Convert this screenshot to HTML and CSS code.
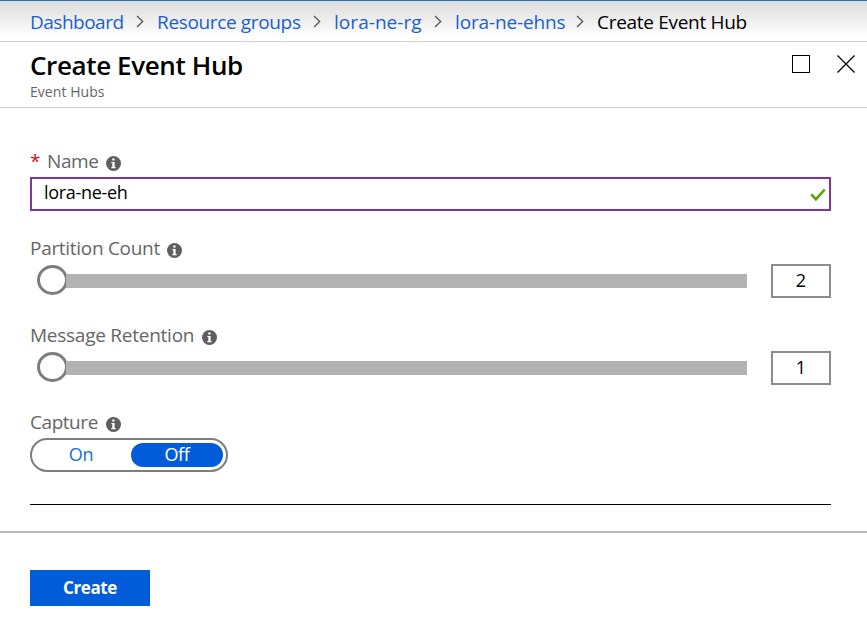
FILE: index.html
```html
<!DOCTYPE html>
<html lang="en">
<head>
<meta charset="utf-8">
<title>Create Event Hub</title>
<link rel="stylesheet" href="styles.css">
</head>
<body>
<svg class="defs" width="0" height="0" aria-hidden="true">
  <symbol id="chevron" viewBox="0 0 8 13"><path d="M1 1l5.7 5.5L1 12" fill="none" stroke="#555" stroke-width="1.3"/></symbol>
  <symbol id="info" viewBox="0 0 15 15"><circle cx="7.5" cy="7.5" r="7.5" fill="#5f5f5f"/><path d="M6.2 2.6h2.4v2H6.2zM5.3 5.9h3.3v5.1h1v1.2H5.3V11h1V7.1h-1z" fill="#fff"/></symbol>
</svg>
<nav class="breadcrumb">
  <a class="crumb crumb-dashboard">Dashboard</a>
  <svg class="chevron"><use href="#chevron"/></svg>
  <a class="crumb crumb-groups">Resource groups</a>
  <svg class="chevron"><use href="#chevron"/></svg>
  <a class="crumb crumb-rg">lora-ne-rg</a>
  <svg class="chevron"><use href="#chevron"/></svg>
  <a class="crumb crumb-ns">lora-ne-ehns</a>
  <svg class="chevron"><use href="#chevron"/></svg>
  <span class="crumb current">Create Event Hub</span>
</nav>
<header class="header">
  <div class="titles">
    <h1 class="title">Create Event Hub</h1>
    <div class="subtitle">Event Hubs</div>
  </div>
  <div class="window-actions">
    <svg width="18" height="18" viewBox="0 0 18 18"><rect x=".5" y=".5" width="17" height="17" fill="none" stroke="#000"/></svg>
    <svg width="18" height="18" viewBox="0 0 18 18"><path d="M.5.5l17 17M17.5.5l-17 17" stroke="#000" stroke-width="1.2"/></svg>
  </div>
</header>
<main class="form">
  <div class="field">
    <div class="label"><span class="required">*</span><span class="label-name">Name</span><svg class="info"><use href="#info"/></svg></div>
    <div class="input"><span>lora-ne-eh</span>
      <svg width="16" height="14" viewBox="0 0 16 14"><path d="M1.3 6.3l4.6 5L14.7 1.5" fill="none" stroke="#57a300" stroke-width="2.6"/></svg>
    </div>
  </div>
  <div class="field">
    <div class="label"><span class="label-partition">Partition Count</span><svg class="info"><use href="#info"/></svg></div>
    <div class="slider-row"><div class="slider"><div class="thumb"></div><div class="track"></div></div><div class="value">2</div></div>
  </div>
  <div class="field">
    <div class="label"><span class="label-retention">Message Retention</span><svg class="info"><use href="#info"/></svg></div>
    <div class="slider-row"><div class="slider"><div class="thumb"></div><div class="track"></div></div><div class="value">1</div></div>
  </div>
  <div class="field">
    <div class="label"><span class="label-capture">Capture</span><svg class="info"><use href="#info"/></svg></div>
    <div class="toggle"><div class="option">On</div><div class="option selected">Off</div></div>
  </div>
  <hr class="rule">
</main>
<footer class="footer"><button class="create">Create</button></footer>
</body>
</html>
```

FILE: styles.css
```css
* { box-sizing: border-box; }
body {
  margin: 0;
  height: 628px;
  overflow: hidden;
  background: #fff;
  color: #000;
  font-family: "Open Sans", "Noto Sans", sans-serif;
}
.defs { display: block; }
.breadcrumb {
  display: flex;
  align-items: center;
  height: 42px;
  padding: 2px 0 0 30px;
  border-top: 1px solid #2a6cad;
  border-bottom: 1px solid #d2d2d2;
  background: linear-gradient(#dcdcdc, #fff 90%);
  font-size: 19px;
  white-space: nowrap;
}
.crumb { color: #1a5ed6; flex: none; }
.crumb-dashboard { width: 94px; letter-spacing: -0.5px; }
.crumb-groups { width: 144px; letter-spacing: -0.35px; }
.crumb-rg { width: 88px; letter-spacing: 0.05px; }
.crumb-ns { width: 109px; letter-spacing: -0.15px; }
.current { color: #000; letter-spacing: -0.3px; }
.chevron { width: 8px; height: 13px; margin: 0 13px 2px 12px; flex: none; }
.header {
  display: flex;
  justify-content: space-between;
  height: 66px;
  padding: 5px 12px 0 30px;
  border-bottom: 1px solid #d2d2d2;
}
.title { margin: 0; font-size: 26px; line-height: 36px; font-weight: 600; letter-spacing: -0.38px; }
.subtitle { margin-top: 1px; font-size: 14px; line-height: 16px; color: #666; letter-spacing: 0.05px; }
.window-actions { display: flex; gap: 27px; padding-top: 8px; }
.form { padding: 35px 36px 0 30px; }
.field { height: 68px; margin-bottom: 19px; }
.label {
  display: flex;
  align-items: center;
  height: 34px;
  padding-top: 2px;
  color: #666;
  font-size: 19px;
  white-space: nowrap;
}
.label-name { width: 51px; letter-spacing: -0.4px; }
.label-partition { width: 129px; letter-spacing: -0.3px; }
.label-retention { width: 164px; letter-spacing: -0.25px; }
.label-capture { width: 68px; letter-spacing: -0.45px; }
.required { width: 17px; color: #e00b1c; }
.info { width: 15px; height: 15px; margin: 4px 0 0 8px; }
.input {
  display: flex;
  align-items: center;
  justify-content: space-between;
  height: 34px;
  padding: 0 3px 2px 12px;
  border: 2px solid #823594;
  font-size: 18px;
  letter-spacing: -0.3px;
}
.input span { margin-top: -2px; }
.input svg { margin-top: 4px; }
.slider-row { display: flex; justify-content: space-between; height: 34px; }
.slider { display: flex; align-items: center; width: 717px; padding-left: 7px; height: 32px; }
.thumb { width: 31px; height: 30px; border: 3px solid #7d7d7d; border-radius: 50%; background: #fff; }
.track { flex: 1; height: 14px; margin: 2px 0 0 -2px; background: #b2b2b2; }
.value {
  width: 60px;
  height: 34px;
  border: 2px solid #8d8d8d;
  font-size: 18px;
  line-height: 28px;
  text-align: center;
}
.toggle {
  display: flex;
  width: 198px;
  height: 34px;
  padding: 3px;
  border: 2px solid #7d7d7d;
  border-radius: 17px;
  font-size: 18px;
  line-height: 23px;
  text-align: center;
}
.option { width: 96px; height: 24px; padding-right: 4px; color: #1a6be0; letter-spacing: -0.3px; }
.option.selected { width: 92px; padding: 0; border-radius: 12px; background: #015cda; color: #fff; }
.rule { margin: 32px 0 0; border: 0; height: 1px; background: #000; }
.footer { margin-top: 26px; padding: 37px 30px 0; border-top: 2px solid #b9b9b9; }
.create {
  width: 120px;
  height: 36px;
  padding: 0;
  border: 0;
  background: #015cda;
  color: #fff;
  font: 700 17px/34px "Open Sans", "Noto Sans", sans-serif;
  letter-spacing: -0.4px;
}
```
